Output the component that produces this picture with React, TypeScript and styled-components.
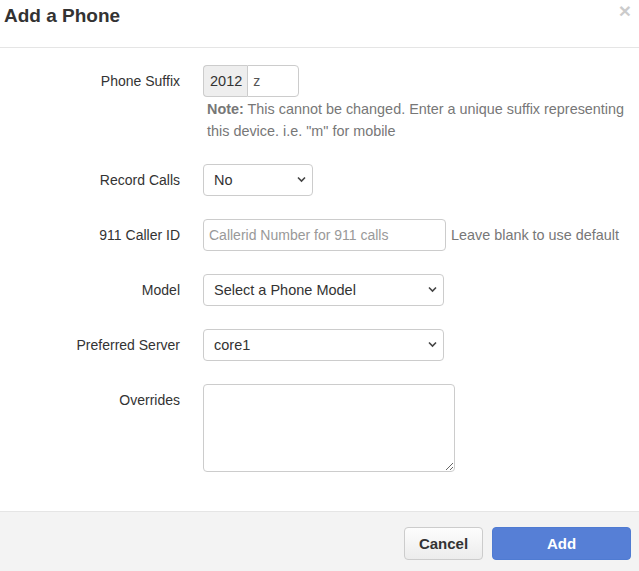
import React from "react";
import styled, { createGlobalStyle } from "styled-components";

const Global = createGlobalStyle`
  html, body { margin: 0; padding: 0; background: #fff; }
  body { font-family: "Liberation Sans", Arial, Helvetica, sans-serif; color: #333; }
  * { box-sizing: border-box; }
`;

const Modal = styled.div`
  width: 639px;
  height: 571px;
  display: flex;
  flex-direction: column;
  background: #fff;
`;

const Header = styled.div`
  height: 48px;
  border-bottom: 1px solid #e5e5e5;
  display: flex;
  align-items: flex-start;
  justify-content: space-between;
  padding: 4px 8px 0 4px;
`;

const Title = styled.h4`
  margin: 0;
  font-size: 19px;
  font-weight: bold;
  line-height: 24px;
  color: #333;
`;

const Close = styled.button`
  border: 0;
  background: none;
  padding: 0;
  margin-top: -4px;
  font-family: "Liberation Sans", Arial, sans-serif;
  font-size: 21px;
  font-weight: bold;
  line-height: 1;
  color: #000;
  opacity: 0.2;
  cursor: pointer;
`;

const Body = styled.div`
  flex: 1;
  padding: 17px 0 0 0;
`;

const Row = styled.div`
  display: grid;
  grid-template-columns: 190px 1fr;
  column-gap: 13px;
  margin-bottom: 23px;
`;

const Label = styled.label`
  text-align: right;
  padding-right: 10px;
  font-size: 14px;
  line-height: 32px;
  color: #333;
`;

const Control = styled.div`
  display: flex;
  flex-direction: column;
  align-items: flex-start;
`;

const Inline = styled.div`
  display: flex;
  align-items: center;
  gap: 5px;
`;

const Group = styled.div`
  display: flex;
  height: 32px;
`;

const Addon = styled.span`
  display: flex;
  align-items: center;
  padding: 0 5px 0 6px;
  background: #eee;
  border: 1px solid #ccc;
  border-right: 0;
  border-radius: 4px 0 0 4px;
  font-size: 14.5px;
  color: #333;
`;

const Input = styled.input<{ $w: number; $grouped?: boolean }>`
  width: ${(p) => p.$w}px;
  height: 32px;
  padding: 0 5px;
  border: 1px solid #ccc;
  border-radius: ${(p) => (p.$grouped ? "0 4px 4px 0" : "4px")};
  font-family: "Liberation Sans", Arial, sans-serif;
  font-size: 14px;
  color: #555;
  outline: none;
  &::placeholder { color: #999; }
`;

const SelectWrap = styled.div<{ $w: number }>`
  position: relative;
  width: ${(p) => p.$w}px;
  height: 32px;
`;

const Select = styled.select`
  appearance: none;
  -webkit-appearance: none;
  width: 100%;
  height: 100%;
  padding: 0 24px 0 10px;
  border: 1px solid #ccc;
  border-radius: 4px;
  background: #fff;
  font-family: "Liberation Sans", Arial, sans-serif;
  font-size: 14.5px;
  color: #333;
  outline: none;
`;

const Chevron = styled.svg`
  position: absolute;
  right: 7px;
  top: 12px;
  width: 9px;
  height: 7px;
  pointer-events: none;
`;

const Help = styled.p`
  margin: 1px 0 -1px 4px;
  font-size: 14.4px;
  line-height: 22px;
  color: #777;
  white-space: nowrap;
`;

const Strong = styled.strong`
  font-weight: bold;
`;

const InlineHelp = styled.span`
  font-size: 14.4px;
  color: #777;
`;

const TextArea = styled.textarea`
  width: 252px;
  height: 88px;
  border: 1px solid #ccc;
  border-radius: 4px;
  padding: 6px;
  font-family: "Liberation Sans", Arial, sans-serif;
  font-size: 14px;
  outline: none;
`;

const Footer = styled.div`
  height: 60px;
  border-top: 1px solid #e5e5e5;
  background: #f3f3f3;
  display: flex;
  justify-content: flex-end;
  align-items: flex-start;
  gap: 9px;
  padding: 15px 8px 0 0;
`;

const Button = styled.button<{ $primary?: boolean }>`
  height: 33px;
  width: ${(p) => (p.$primary ? 139 : 79)}px;
  border-radius: 4px;
  font-family: "Liberation Sans", Arial, sans-serif;
  font-size: 15px;
  font-weight: bold;
  cursor: pointer;
  border: 1px solid ${(p) => (p.$primary ? "#4f7bd2" : "#ccc")};
  background: ${(p) => (p.$primary ? "#567fd6" : "linear-gradient(#fdfdfd, #ececec)")};
  color: ${(p) => (p.$primary ? "#fff" : "#333")};
`;

const Chev = () => (
  <Chevron viewBox="0 0 9 7">
    <path d="M1 1.5 L4.5 5 L8 1.5" fill="none" stroke="#444" strokeWidth="1.6" />
  </Chevron>
);

export default function App() {
  return (
    <>
      <Global />
      <Modal>
        <Header>
          <Title>Add a Phone</Title>
          <Close aria-label="Close">×</Close>
        </Header>
        <Body>
          <Row>
            <Label>Phone Suffix</Label>
            <Control>
              <Group>
                <Addon>2012</Addon>
                <Input $w={52} $grouped defaultValue="z" />
              </Group>
              <Help>
                <Strong>Note:</Strong> This cannot be changed. Enter a unique suffix representing
                <br />
                this device. i.e. "m" for mobile
              </Help>
            </Control>
          </Row>
          <Row>
            <Label>Record Calls</Label>
            <Control>
              <SelectWrap $w={110}>
                <Select defaultValue="no">
                  <option value="no">No</option>
                  <option value="yes">Yes</option>
                </Select>
                <Chev />
              </SelectWrap>
            </Control>
          </Row>
          <Row>
            <Label>911 Caller ID</Label>
            <Control>
              <Inline>
                <Input $w={243} placeholder="Callerid Number for 911 calls" />
                <InlineHelp>Leave blank to use default</InlineHelp>
              </Inline>
            </Control>
          </Row>
          <Row>
            <Label>Model</Label>
            <Control>
              <SelectWrap $w={241}>
                <Select defaultValue="">
                  <option value="">Select a Phone Model</option>
                </Select>
                <Chev />
              </SelectWrap>
            </Control>
          </Row>
          <Row>
            <Label>Preferred Server</Label>
            <Control>
              <SelectWrap $w={241}>
                <Select defaultValue="core1">
                  <option value="core1">core1</option>
                </Select>
                <Chev />
              </SelectWrap>
            </Control>
          </Row>
          <Row>
            <Label>Overrides</Label>
            <Control>
              <TextArea />
            </Control>
          </Row>
        </Body>
        <Footer>
          <Button>Cancel</Button>
          <Button $primary>Add</Button>
        </Footer>
      </Modal>
    </>
  );
}
